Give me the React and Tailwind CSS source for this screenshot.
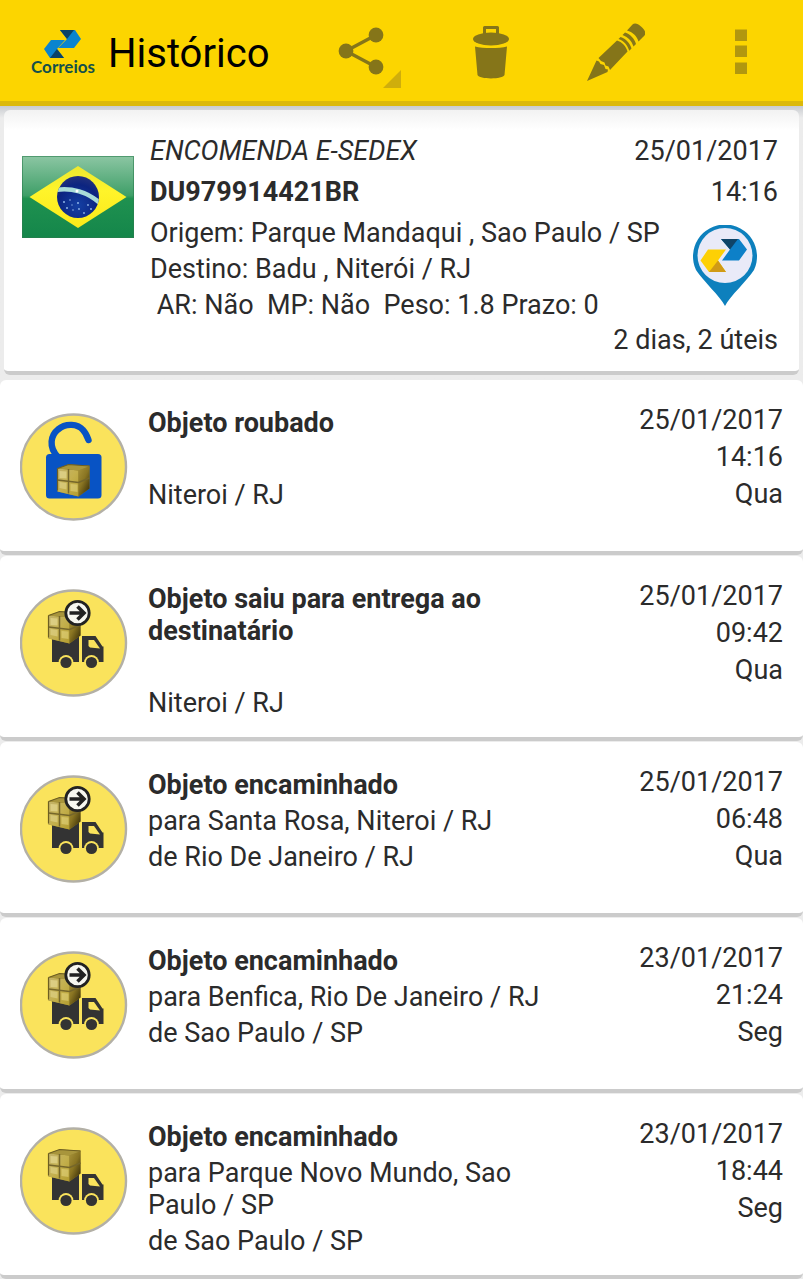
import React from 'react';

function HeaderMark() {
  return (
    <span className="flex w-16 flex-col items-center">
      <svg viewBox="0 0 40 30" className="h-[30px] w-10" aria-hidden="true">
        <path d="M17 1H32L38 10L31 19H15L24 10Z" fill="#0a84cf" />
        <path d="M17 1H31L24 10Z" fill="#0b4366" />
        <path d="M1 20L8 11H22L14 20L21 29H7Z" fill="#0a84cf" />
        <path d="M14 20L21 29H7Z" fill="#0b4366" />
      </svg>
      <span className="font-['Lato',sans-serif] text-[17px] leading-4 font-bold text-[#14504a]">Correios</span>
    </span>
  );
}

function ShareIcon() {
  return (
    <svg viewBox="0 0 64 64" className="size-16" aria-hidden="true">
      <path d="M39 15L9 31L39 47" fill="none" stroke="#857519" strokeWidth="3.4" />
      <circle cx="39" cy="15" r="7.4" fill="#857519" />
      <circle cx="9" cy="31" r="7.4" fill="#857519" />
      <circle cx="39" cy="47" r="7.4" fill="#857519" />
      <path d="M64 50V68H46Z" fill="#cfae0c" />
    </svg>
  );
}

function TrashIcon() {
  return (
    <svg viewBox="0 0 36 54" className="h-[54px] w-9" aria-hidden="true">
      <path d="M11.500 9V2.500H24.500V9" fill="none" stroke="#857519" strokeWidth="3" strokeLinejoin="round" />
      <ellipse cx="18" cy="14" rx="18" ry="6.500" fill="#857519" />
      <path d="M2 21.500C10 23.600 26 23.600 34 21.500L31.500 50C30 54.500 6 54.500 4.500 50Z" fill="#857519" />
    </svg>
  );
}

function PencilIcon() {
  return (
    <svg viewBox="0 0 58 58" className="size-[58px]" fill="#857519" aria-hidden="true">
      <path d="M0 58L9.500 37.500L12 38.500L13.500 41L17 42L18.500 46L21 46.500L20.500 49Z" />
      <path d="M11.500 35L30 17.500C35 19 39 23 40.500 28.500L23 47L21.500 43.500L18.500 42.500L17.500 39.500L14 38Z" />
      <path d="M31.500 16L33.500 14C39 16 43 20 44.500 25.500L42.300 27.700C40 21.500 37 18 31.500 16Z" />
      <path d="M35.500 12L38 9.500C43.500 11.500 47.500 15.500 49 21L46.500 23.500C44.500 17.500 41.500 14.500 35.500 12Z" />
      <path d="M40 7.500L45.500 1.500C47.500 -0.500 51 0.500 54 3.500C58 7 59.500 10.500 57.500 12.500L51.500 18.500C50 13 45.500 9 40 7.500Z" />
    </svg>
  );
}

function MoreIcon() {
  return (
    <svg viewBox="0 0 12 46" className="h-[46px] w-3" fill="#b1970f" aria-hidden="true">
      <rect width="12" height="11.500" y="0.500" />
      <rect width="12" height="11.500" y="16.500" />
      <rect width="12" height="11.500" y="33.500" />
    </svg>
  );
}

function BrazilFlag() {
  return (
    <svg viewBox="0 0 112 82" className="h-[82px] w-28" role="img" aria-label="Brasil">
      <defs>
        <linearGradient id="field" x1="0" y1="0" x2="0" y2="1">
          <stop offset="0" stopColor="#8cc6a3" />
          <stop offset="0.480" stopColor="#3f9f68" />
          <stop offset="0.520" stopColor="#1f9150" />
          <stop offset="1" stopColor="#14864a" />
        </linearGradient>
        <linearGradient id="rhomb" x1="0" y1="0" x2="0" y2="1">
          <stop offset="0" stopColor="#ece830" />
          <stop offset="0.400" stopColor="#fff42a" />
          <stop offset="1" stopColor="#fbe91a" />
        </linearGradient>
        <radialGradient id="globe" cx="0.5" cy="0.7" r="0.700">
          <stop offset="0" stopColor="#1440a4" />
          <stop offset="0.700" stopColor="#0c2480" />
          <stop offset="1" stopColor="#23327c" />
        </radialGradient>
        <clipPath id="disc"><circle cx="56" cy="41" r="21" /></clipPath>
      </defs>
      <rect width="112" height="82" fill="url(#field)" />
      <rect x="0.500" y="0.500" width="111" height="81" fill="none" stroke="#2c7d4e" strokeOpacity="0.600" />
      <path d="M56 10L104.500 41L56 72L7.500 41Z" fill="url(#rhomb)" />
      <circle cx="56" cy="41" r="21" fill="url(#globe)" />
      <path d="M33 34C49 31 66 36 79 48" fill="none" stroke="#a9dcd8" strokeWidth="4.500" clipPath="url(#disc)" />
      <g fill="#8fb4e8">
        <circle cx="42" cy="46" r="1" /><circle cx="48" cy="44" r="0.800" /><circle cx="45" cy="52" r="1" />
        <circle cx="51" cy="54" r="0.800" /><circle cx="56" cy="47" r="1" /><circle cx="57" cy="53" r="0.900" />
        <circle cx="62" cy="57" r="0.900" /><circle cx="66" cy="49" r="0.900" /><circle cx="69" cy="53" r="1" />
        <circle cx="50" cy="49" r="0.700" />
      </g>
      <circle cx="55" cy="35" r="1.500" fill="#fff" />
    </svg>
  );
}

function PostPin() {
  return (
    <svg viewBox="0 0 66 82" className="h-[82px] w-[66px]" role="img" aria-label="Correios">
      <path d="M33 81C28 71 11 56 4 45A32 32 0 1 1 62 45C55 56 38 71 33 81Z" fill="#0d80bd" />
      <circle cx="33" cy="30.500" r="27.500" fill="#e9eaf8" />
      <path d="M29 14H47L55 24.500L47 35.500H30L38 24.500Z" fill="#0d80c8" />
      <path d="M29 14H46L38 24.500Z" fill="#0f4468" />
      <path d="M8.500 35.500L16 24.500H34L26 35.500L34 47H17Z" fill="#fdd005" />
      <path d="M26 35.500L34 47H17Z" fill="#d09a16" />
    </svg>
  );
}

function ParcelShape() {
  return (
    <g>
      <path d="M1 5L12 1L33 2L33 25L22 33L1 28Z" fill="#8d7a26" />
      <path d="M1 5L22 7V33L1 28Z" fill="url(#parcel-front)" />
      <path d="M22 7L33 2.500V25L22 33Z" fill="url(#parcel-side)" />
      <path d="M1 5L12 1L33 2.500L22 7Z" fill="#a8953c" />
      <path d="M3 7.500L10 8V15L3 14.500Z" fill="#eee3a0" fillOpacity="0.550" />
      <path d="M3 18.500L10 19.500V26L3 24.500Z" fill="#eee3a0" fillOpacity="0.450" />
      <path d="M14 20.500L21 21V28.500L14 27.500Z" fill="#f0e390" fillOpacity="0.450" />
      <path d="M12 5.500V30" stroke="#75662a" strokeWidth="1.500" />
      <path d="M1 16.500L22 19L33 14.500" fill="none" stroke="#75662a" strokeWidth="1.500" />
      <path d="M1 5V27M1 5L12 1L33 2.500" fill="none" stroke="#6d5e22" strokeWidth="1.200" />
    </g>
  );
}

function ParcelPaints() {
  return (
    <svg className="absolute size-0" aria-hidden="true">
      <defs>
        <linearGradient id="parcel-front" x1="0" y1="0" x2="1" y2="1">
          <stop offset="0" stopColor="#c3b36a" />
          <stop offset="0.500" stopColor="#c4b04e" />
          <stop offset="1" stopColor="#b39d30" />
        </linearGradient>
        <linearGradient id="parcel-side" x1="0" y1="0" x2="0.800" y2="1">
          <stop offset="0" stopColor="#a8933a" />
          <stop offset="0.500" stopColor="#8a7522" />
          <stop offset="1" stopColor="#3d3108" />
        </linearGradient>
      </defs>
    </svg>
  );
}

function StatusIcon({ kind }) {
  return (
    <svg viewBox="0 0 108 108" className="size-[108px] shrink-0" aria-hidden="true">
      <circle cx="53.500" cy="54" r="52.500" fill="#fae35c" stroke="#b3b0a6" strokeWidth="2.400" />
      {kind === 'unlocked' ? (
        <>
          <path d="M38 44C28 34 31 22 38 16.500C46 9.500 58 11 63 17C66 20 67 23 68.500 27" fill="none" stroke="#0853c4" strokeWidth="6.400" strokeLinecap="round" />
          <rect x="26" y="41" width="55.500" height="44.500" rx="3.500" fill="#0853c4" />
          <g transform="translate(36.500 50.500)"><ParcelShape /></g>
        </>
      ) : (
        <>
          <path d="M32 42H59V73H32Z" fill="#333333" />
          <path d="M62 47H75.500L82.500 57.500H83.500V73H62Z" fill="#333333" />
          <path d="M68.500 51H74L80 59.500L70 58.500L68.500 57Z" fill="#fae35c" />
          <circle cx="46" cy="73.500" r="7.400" fill="#fae35c" />
          <circle cx="71.500" cy="73.500" r="7.400" fill="#fae35c" />
          <circle cx="46" cy="73.500" r="5.600" fill="#333333" />
          <circle cx="71.500" cy="73.500" r="5.600" fill="#333333" />
          <g transform="translate(27.500 21.500)"><ParcelShape /></g>
          {kind === 'moving' && (
            <>
              <circle cx="57.500" cy="24" r="11.700" fill="#f7f7f0" stroke="#222222" strokeWidth="2.800" />
              <path d="M49.500 24H64M57.500 17.500L64 24L57.500 30.500" fill="none" stroke="#222222" strokeWidth="3.600" />
            </>
          )}
        </>
      )}
    </svg>
  );
}

const events = [
  { kind: 'unlocked', title: 'Objeto roubado', lines: ['', 'Niteroi / RJ'], date: '25/01/2017', time: '14:16', day: 'Qua' },
  { kind: 'moving', title: 'Objeto saiu para entrega ao destinatário', lines: ['', 'Niteroi / RJ'], date: '25/01/2017', time: '09:42', day: 'Qua' },
  { kind: 'moving', title: 'Objeto encaminhado', lines: ['para Santa Rosa, Niteroi / RJ', 'de Rio De Janeiro / RJ'], date: '25/01/2017', time: '06:48', day: 'Qua' },
  { kind: 'moving', title: 'Objeto encaminhado', lines: ['para Benfica, Rio De Janeiro / RJ', 'de Sao Paulo / SP'], date: '23/01/2017', time: '21:24', day: 'Seg' },
  { kind: 'truck', title: 'Objeto encaminhado', lines: ['para Parque Novo Mundo, Sao Paulo / SP', 'de Sao Paulo / SP'], date: '23/01/2017', time: '18:44', day: 'Seg' },
];

function EventCard({ event }) {
  return (
    <li className="flex min-h-[175px] items-start rounded-md border-b-4 border-[#cbcbcb] bg-white pr-5 pb-[18px] pl-5">
      <div className="pt-[33px]"><StatusIcon kind={event.kind} /></div>
      <div className="ml-5 flex min-w-0 flex-1 flex-col gap-1 pt-[27px]">
        <h2 className="max-w-[400px] font-bold">{event.title}</h2>
        {event.lines.map((line, i) => (
          <p key={i} className="min-h-8 max-w-[400px]">{line}</p>
        ))}
      </div>
      <div className="flex flex-col gap-[5px] pt-6 text-right">
        <time>{event.date}</time>
        <span>{event.time}</span>
        <span>{event.day}</span>
      </div>
    </li>
  );
}

export default function App() {
  return (
    <div className="bg-[#ececec] font-['Roboto',sans-serif] text-[27px] leading-8 text-[#2b2b2b]">
      <ParcelPaints />
      <header className="flex h-[106px] items-center border-b-[5px] border-[#dcb90a] bg-[#fcd500] pt-[3px] pr-14 pl-[31px]">
        <HeaderMark />
        <h1 className="ml-[13px] pt-[3px] text-[40px] leading-12 text-black">Histórico</h1>
        <nav className="flex flex-1 items-center justify-end" aria-label="Ações">
          <button type="button" aria-label="Compartilhar" className="mr-[72px] [&>svg]:overflow-visible"><ShareIcon /></button>
          <button type="button" aria-label="Excluir" className="mr-[78px]"><TrashIcon /></button>
          <button type="button" aria-label="Editar" className="mr-[90px]"><PencilIcon /></button>
          <button type="button" aria-label="Mais opções"><MoreIcon /></button>
        </nav>
      </header>
      <main>
        <div className="bg-linear-to-b from-[#c9ccd0] from-0% to-[#ececec] to-[12px] px-1 pt-1 pb-[5px]">
          <section className="flex rounded-md border-b-4 border-[#cbcbcb] bg-linear-to-b from-[#f2f2f2] to-white to-[20px] pt-[25px] pr-[21px] pb-[15px] pl-[18px]">
            <div className="pt-[21px]"><BrazilFlag /></div>
            <div className="ml-4 flex-1">
              <div className="flex justify-between"><em>ENCOMENDA E-SEDEX</em><time>25/01/2017</time></div>
              <div className="mt-[9px] flex justify-between"><strong>DU979914421BR</strong><span>14:16</span></div>
              <div className="mt-[9px] flex justify-between">
                <div className="flex flex-col gap-1 whitespace-nowrap">
                  <p>Origem: Parque Mandaqui , Sao Paulo / SP</p>
                  <p>Destino: Badu , Niterói / RJ</p>
                  <p className="whitespace-pre"> AR: Não  MP: Não  Peso: 1.8 Prazo: 0</p>
                </div>
                <div className="mr-5 pt-2"><PostPin /></div>
              </div>
              <p className="mt-[3px] text-right">2 dias, 2 úteis</p>
            </div>
          </section>
        </div>
        <ul className="flex flex-col gap-px">
          {events.map((event) => (
            <EventCard key={event.date + event.time} event={event} />
          ))}
        </ul>
      </main>
    </div>
  );
}
